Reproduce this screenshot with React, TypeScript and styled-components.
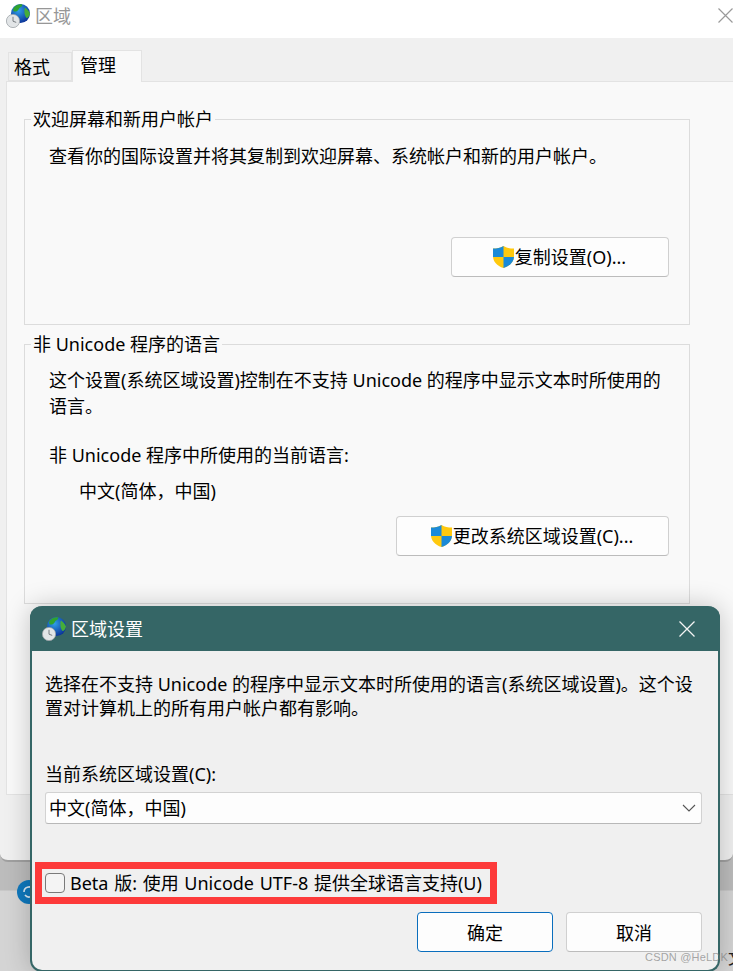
import * as React from "react";
import styled, { createGlobalStyle } from "styled-components";

const Global = createGlobalStyle`
  html, body {
    margin: 0;
    padding: 0;
    background: #c8c8c8;
  }
  * {
    box-sizing: border-box;
  }
`;

const font = `"Noto Sans", "Noto Sans CJK SC", sans-serif`;

const Desktop = styled.div`
  position: relative;
  width: 733px;
  height: 971px;
  overflow: hidden;
  font-family: ${font};
  font-size: 18px;
  line-height: 26px;
  color: #000;
  background: linear-gradient(180deg, #bcbcbc 0, #bcbcbc 890px, #d4d4d4 891px, #d4d4d4 100%);
`;

const BackWindow = styled.div`
  display: flex;
  flex-direction: column;
  height: 862px;
  background: #f0f0f0;
  border-bottom: 2px solid #a0a0a0;
  border-radius: 0 0 8px 8px;
`;

const TitleBar = styled.div`
  display: flex;
  align-items: center;
  justify-content: space-between;
  height: 38px;
  flex: none;
  padding: 0 0 7px 6px;
  background: #fff;
`;

const TitleLeft = styled.div`
  display: flex;
  align-items: center;
  gap: 5px;
`;

const TitleText = styled.span`
  color: #979797;
`;

const CloseBack = styled.svg`
  width: 15px;
  height: 15px;
  stroke: #9a9a9a;
  stroke-width: 1.2;
  fill: none;
`;

const TabRow = styled.div`
  display: flex;
  align-items: flex-end;
  height: 43px;
  flex: none;
  padding-left: 8px;
`;

const Tab = styled.div<{ $active?: boolean }>`
  position: relative;
  z-index: ${p => (p.$active ? 1 : 0)};
  height: ${p => (p.$active ? 32 : 29)}px;
  width: ${p => (p.$active ? 70 : 64)}px;
  margin-bottom: ${p => (p.$active ? -1 : 0)}px;
  padding: 1px 0 0 ${p => (p.$active ? 7 : 5)}px;
  background: ${p => (p.$active ? "#f9f9f9" : "#f0f0f0")};
  border: 1px solid #e3e3e3;
  border-bottom: ${p => (p.$active ? "none" : "1px solid #e3e3e3")};
`;

const Panel = styled.div`
  flex: none;
  height: 714px;
  margin-left: 6px;
  padding: 25px 43px 0 17px;
  background: #f9f9f9;
  border: 1px solid #e3e3e3;
  border-right: none;
`;

const Group = styled.fieldset<{ $height: number }>`
  display: flex;
  flex-direction: column;
  height: ${p => p.$height}px;
  margin: 0 0 7px;
  padding: 0 20px 0 24px;
  border: 1px solid #dcdcdc;
`;

const Legend = styled.legend`
  margin-left: -18px;
  padding: 0 2px;
  line-height: 24px;
  height: 24px;
`;

const Para = styled.div<{ $top?: number; $indent?: number }>`
  margin-top: ${p => p.$top ?? 0}px;
  margin-left: ${p => p.$indent ?? 0}px;
`;

const ShieldButton = styled.div<{ $width: number; $top: number }>`
  display: flex;
  align-items: center;
  justify-content: center;
  align-self: flex-end;
  width: ${p => p.$width}px;
  height: 40px;
  margin-top: ${p => p.$top}px;
  padding-right: 2px;
  background: #fdfdfd;
  border: 1px solid #d0d0d0;
  border-bottom-color: #bcbcbc;
  border-radius: 4px;
`;

const Dialog = styled.div`
  position: absolute;
  left: 30px;
  top: 606px;
  width: 690px;
  height: 366px;
  display: flex;
  flex-direction: column;
  background: #f0f0f0;
  border: 2px solid #356666;
  border-top: none;
  border-radius: 12px;
  box-shadow: 0 0 26px rgba(0, 0, 0, 0.22);
`;

const DialogBar = styled.div`
  display: flex;
  align-items: center;
  justify-content: space-between;
  flex: none;
  height: 45px;
  margin: 0 -2px;
  padding: 0 25px 0 12px;
  background: #356666;
  border-radius: 12px 12px 0 0;
  color: #fff;
`;

const CloseDialog = styled.svg`
  width: 16px;
  height: 16px;
  stroke: #f4f4f4;
  stroke-width: 1.3;
  fill: none;
`;

const DialogBody = styled.div`
  display: flex;
  flex-direction: column;
  padding: 21px 16px 0 13px;
  line-height: 24px;
`;

const SelectBox = styled.div`
  display: flex;
  align-items: center;
  justify-content: space-between;
  height: 32px;
  margin-top: 6px;
  padding: 0 5px 0 3px;
  background: #fdfdfd;
  border: 1px solid #d2d2d2;
  border-bottom-color: #b8b8b8;
  border-radius: 3px;
`;

const Highlight = styled.div`
  display: flex;
  align-items: center;
  align-self: flex-start;
  gap: 5px;
  width: 462px;
  height: 42px;
  margin: 38px 0 0 -10px;
  padding-left: 3px;
  border: 7px solid #fd3a3a;
  white-space: nowrap;
  word-spacing: 1px;
`;

const CheckBox = styled.span`
  display: block;
  flex: none;
  width: 20px;
  height: 20px;
  background: #f4f4f4;
  border: 1px solid #7a7a7a;
  border-radius: 4px;
`;

const Actions = styled.div`
  display: flex;
  justify-content: flex-end;
  gap: 13px;
  margin-top: 8px;
`;

const ActionButton = styled.div<{ $primary?: boolean }>`
  display: flex;
  align-items: center;
  justify-content: center;
  width: 136px;
  height: 40px;
  padding-top: 2px;
  background: #fdfdfd;
  border: 1px solid ${p => (p.$primary ? "#0a6ebd" : "#d0d0d0")};
  border-bottom-color: ${p => (p.$primary ? "#0a6ebd" : "#bcbcbc")};
  border-radius: 4px;
`;

const Watermark = styled.span`
  position: absolute;
  left: 645px;
  top: 950px;
  font-family: "Liberation Sans", sans-serif;
  font-size: 11px;
  line-height: 14px;
  color: rgba(120, 120, 120, 0.65);
  letter-spacing: 0.2px;
`;

const Clipped = styled.span`
  position: absolute;
  left: 728px;
  top: 946px;
  font-size: 16px;
  line-height: 24px;
  color: #222;
`;

const UpdateBadge = styled.svg`
  position: absolute;
  left: 17px;
  top: 880px;
  width: 24px;
  height: 24px;
`;

const GlobeIcon: React.FC<{ size: number; id: string }> = ({ size, id }) => (
  <svg width={size} height={size} viewBox="0 0 24 24">
    <defs>
      <radialGradient id={id} cx="0.4" cy="0.35" r="0.7">
        <stop offset="0" stopColor="#2f9fe8" />
        <stop offset="1" stopColor="#0a2f95" />
      </radialGradient>
    </defs>
    <circle cx="14.500" cy="9.500" r="9.500" fill={`url(#${id})`} />
    <path d="M8 3.500c2-2.500 5-3.500 8-3.200 1 1-.5 2.700-2 3.200-1.500 1-1 2.500-3 3.500-1 .5-2.500 1-3.500 0-.5-1-.5-2.500.5-3.500z" fill="#2fa32f" />
    <path d="M19 3.500c2 1.500 4.500 4 5 6-.5 2.500-2 4.500-3.500 4.500-1-1-1.500-3-2-4.500 0-2-.5-4.500.5-6z" fill="#46ad3a" />
    <circle cx="7" cy="17" r="6.600" fill="#e2e5e7" stroke="#9ea4a8" strokeWidth="0.8" />
    <path d="M7 12.800v4.400l3.200 1.200" fill="none" stroke="#6d7377" strokeWidth="0.9" />
  </svg>
);

const ShieldIcon: React.FC = () => (
  <svg width="23" height="24" viewBox="0 0 23 24">
    <path d="M11.500 1C8.500 3 5 3.500 1 3.500V11c0 5.500 4 10 10.500 12C18 21 22 16.500 22 11V3.500C18 3.500 14.500 3 11.500 1z" fill="#ffc90e" />
    <path d="M11.500 1C8.500 3 5 3.500 1 3.500V12h10.500z" fill="#1a8ad8" />
    <path d="M11.500 12H22c-.3 5-4.300 9.200-10.500 11z" fill="#1a8ad8" />
  </svg>
);

export default function App() {
  return (
    <Desktop>
      <Global />
      <BackWindow>
        <TitleBar>
          <TitleLeft>
            <GlobeIcon size={24} id="globe-back" />
            <TitleText>区域</TitleText>
          </TitleLeft>
          <CloseBack viewBox="0 0 15 15">
            <path d="M0.500 0.500l14 14M14.500 0.500l-14 14" />
          </CloseBack>
        </TitleBar>
        <TabRow>
          <Tab>格式</Tab>
          <Tab $active>管理</Tab>
        </TabRow>
        <Panel>
          <Group $height={218}>
            <Legend>欢迎屏幕和新用户帐户</Legend>
            <Para $top={12}>查看你的国际设置并将其复制到欢迎屏幕、系统帐户和新的用户帐户。</Para>
            <ShieldButton $width={218} $top={68}>
              <ShieldIcon />
              复制设置(O)...
            </ShieldButton>
          </Group>
          <Group $height={272}>
            <Legend>非 Unicode 程序的语言</Legend>
            <Para $top={11}>这个设置(系统区域设置)控制在不支持 Unicode 的程序中显示文本时所使用的语言。</Para>
            <Para $top={23}>非 Unicode 程序中所使用的当前语言:</Para>
            <Para $top={10} $indent={30}>中文(简体，中国)</Para>
            <ShieldButton $width={273} $top={12}>
              <ShieldIcon />
              更改系统区域设置(C)...
            </ShieldButton>
          </Group>
        </Panel>
      </BackWindow>
      <UpdateBadge viewBox="0 0 24 24">
        <circle cx="12" cy="12" r="12" fill="#0f78bd" />
        <path d="M7 12a5 5 0 0 1 9-3M17 12a5 5 0 0 1-9 3" fill="none" stroke="#dbeaf5" strokeWidth="1.600" />
      </UpdateBadge>
      <Clipped>文</Clipped>
      <Dialog>
        <DialogBar>
          <TitleLeft>
            <GlobeIcon size={24} id="globe-dialog" />
            <span>区域设置</span>
          </TitleLeft>
          <CloseDialog viewBox="0 0 16 16">
            <path d="M0.500 0.500l15 15M15.500 0.500l-15 15" />
          </CloseDialog>
        </DialogBar>
        <DialogBody>
          <div>选择在不支持 Unicode 的程序中显示文本时所使用的语言(系统区域设置)。这个设置对计算机上的所有用户帐户都有影响。</div>
          <Para $top={42}>当前系统区域设置(C):</Para>
          <SelectBox>
            中文(简体，中国)
            <svg width="14" height="8" viewBox="0 0 14 8">
              <path d="M1 1l6 6 6-6" fill="none" stroke="#555" strokeWidth="1.100" />
            </svg>
          </SelectBox>
          <Highlight>
            <CheckBox />
            Beta 版: 使用 Unicode UTF-8 提供全球语言支持(U)
          </Highlight>
          <Actions>
            <ActionButton $primary>确定</ActionButton>
            <ActionButton>取消</ActionButton>
          </Actions>
        </DialogBody>
      </Dialog>
      <Watermark>CSDN @HeLDK</Watermark>
    </Desktop>
  );
}
